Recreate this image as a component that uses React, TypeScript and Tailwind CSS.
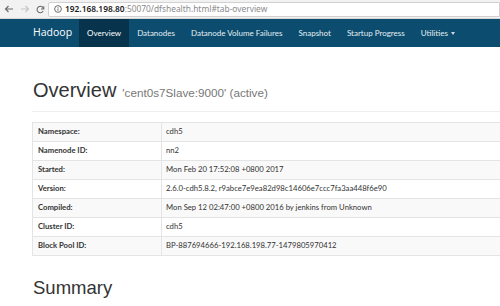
import React from 'react';

const rows: [string, string][] = [
  ['Namespace:', 'cdh5'],
  ['Namenode ID:', 'nn2'],
  ['Started:', 'Mon Feb 20 17:52:08 +0800 2017'],
  ['Version:', '2.6.0-cdh5.8.2, r9abce7e9ea82d98c14606e7ccc7fa3aa448f6e90'],
  ['Compiled:', 'Mon Sep 12 02:47:00 +0800 2016 by jenkins from Unknown'],
  ['Cluster ID:', 'cdh5'],
  ['Block Pool ID:', 'BP-887694666-192.168.198.77-1479805970412'],
];

const navItems = ['Overview', 'Datanodes', 'Datanode Volume Failures', 'Snapshot', 'Startup Progress'];

export default function App() {
  return (
    <div className="w-[500px] h-[306px] overflow-hidden bg-white" style={{ fontFamily: 'Lato, "Open Sans", sans-serif' }}>
      {/* browser chrome */}
      <div className="h-[19px] bg-[#f2f2f2] border-b border-[#d6d6d6] flex items-center">
        <div className="flex items-center w-[48px] pl-[4px] gap-[6px]">
          <svg width="10" height="10" viewBox="0 0 10 10" fill="none" stroke="#6a6a6a" strokeWidth="1.1">
            <path d="M9 5H1.5M4.5 2L1.5 5l3 3" />
          </svg>
          <svg width="10" height="10" viewBox="0 0 10 10" fill="none" stroke="#c4c4c4" strokeWidth="1.1">
            <path d="M1 5h7.5M5.5 2l3 3-3 3" />
          </svg>
          <svg width="9" height="9" viewBox="0 0 10 10" fill="none" stroke="#6a6a6a" strokeWidth="1.2">
            <path d="M8.3 4.2A3.6 3.6 0 1 0 8 6.6" />
            <path d="M8.6 1.4v3H5.6" />
          </svg>
        </div>
        <div className="h-[15px] flex-1 bg-white border border-[#d0d0d0] rounded-l-[2px] flex items-center pl-[5px] gap-[3px] text-[8.4px] leading-none">
          <svg width="8" height="8" viewBox="0 0 10 10" fill="none" stroke="#5a5a5a" strokeWidth="1.1">
            <circle cx="5" cy="5" r="4.2" />
            <path d="M5 4.3v3M5 2.5v.9" />
          </svg>
          <span className="text-[#1a1a1a]" style={{ fontFamily: '"Noto Sans", "Open Sans", sans-serif' }}>
            <span className="font-semibold">192.168.198.80</span>
            <span className="text-[#8a8a8a]">:50070/dfshealth.html#tab-overview</span>
          </span>
        </div>
      </div>

      {/* navbar */}
      <div className="h-[28px] bg-[#0c4d6f] flex items-stretch pl-[33px] text-[8px] text-[#e3edf2] whitespace-nowrap">
        <div className="flex items-center pr-[7px] text-[10.5px] text-white" style={{ fontFamily: '"Open Sans", sans-serif' }}>Hadoop</div>
        {navItems.map((item, i) => (
          <div key={item} className={`flex items-center px-[8px] ${i === 0 ? 'bg-[#07344c] text-white' : ''}`}>
            {item}
          </div>
        ))}
        <div className="flex items-center px-[8px] gap-[3px]">
          Utilities
          <span className="inline-block w-0 h-0 border-l-[2.5px] border-r-[2.5px] border-t-[3px] border-l-transparent border-r-transparent border-t-[#c9d8e0] mt-[1px]" />
        </div>
      </div>

      {/* content */}
      <div className="pl-[32px] w-[600px]" style={{ fontFamily: '"Liberation Sans", Arial, sans-serif' }}>
        <div className="pt-[33px] pb-[9px] border-b border-[#eeeeee] flex items-baseline gap-[6px] pl-[1px]">
          <span className="text-[20px] leading-none text-[#333]">Overview</span>
          <span className="text-[11.7px] text-[#777]">'cent0s7Slave:9000' (active)</span>
        </div>

        <table className="mt-[10px] w-full border-collapse text-[7.7px] text-[#333]" style={{ fontFamily: 'Lato, "Open Sans", sans-serif' }}>
          <tbody>
            {rows.map(([k, v], i) => (
              <tr key={k} className={i % 2 === 0 ? 'bg-[#f9f9f9]' : 'bg-white'}>
                <th className="w-[129px] h-[19px] border border-[#e4e4e4] text-left font-bold pl-[5px] py-0">{k}</th>
                <td className="h-[19px] border border-[#e4e4e4] pl-[4px] py-0">{v}</td>
              </tr>
            ))}
          </tbody>
        </table>

        <div className="pt-[23px] pl-[1px] text-[18.5px] leading-none text-[#333]">Summary</div>
      </div>
    </div>
  );
}
